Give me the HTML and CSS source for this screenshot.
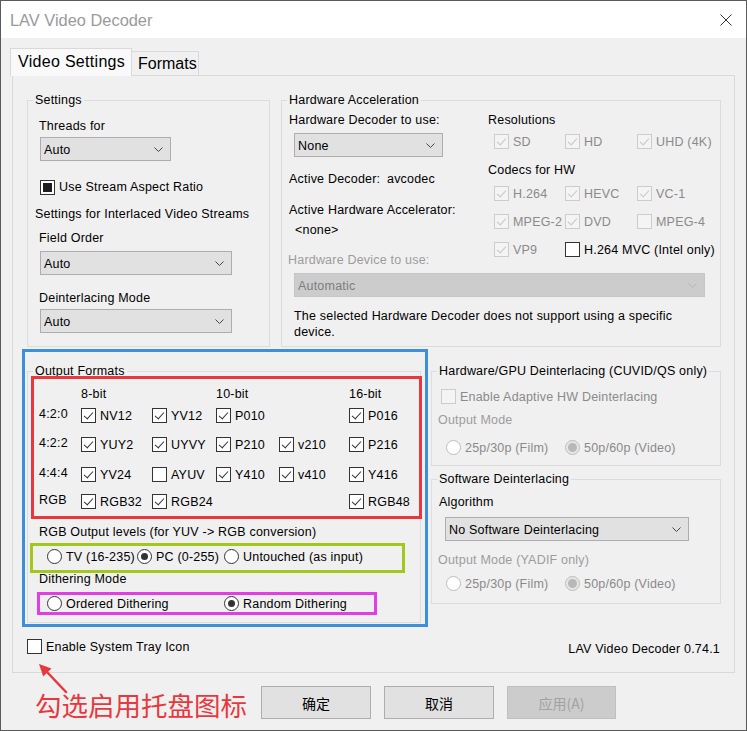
FILE: index.html
```html
<!DOCTYPE html>
<html>
<head>
<meta charset="utf-8">
<link rel="stylesheet" href="styles.css">
</head>
<body>
<div class="window">
  <div class="titlebar">
    <span class="title">LAV Video Decoder</span>
    <svg class="close" width="12" height="12" viewBox="0 0 12 12"><path d="M0.5 0.5L11.5 11.5M11.5 0.5L0.5 11.5" stroke="#333" stroke-width="1" fill="none"/></svg>
  </div>
  <div class="tabs">
    <div class="tab active">Video Settings</div>
    <div class="tab fmt">Formats</div>
  </div>
  <div class="panel">
    <div class="row1">
      <div class="group g-set">
        <span class="gtitle">Settings</span>
        <div class="txt set-threads">Threads for</div>
        <div class="sel sel-threads"><span>Auto</span><svg width="9" height="5" viewBox="0 0 9 5"><path d="M0.5 0.5L4.5 4.5L8.5 0.5" fill="none" stroke="#444"/></svg></div>
        <div class="ck set-aspect"><span class="cb ind"></span><span>Use Stream Aspect Ratio</span></div>
        <div class="txt set-inter">Settings for Interlaced Video Streams</div>
        <div class="txt set-field">Field Order</div>
        <div class="sel sel-field"><span>Auto</span><svg width="9" height="5" viewBox="0 0 9 5"><path d="M0.5 0.5L4.5 4.5L8.5 0.5" fill="none" stroke="#444"/></svg></div>
        <div class="txt set-deint">Deinterlacing Mode</div>
        <div class="sel sel-deint"><span>Auto</span><svg width="9" height="5" viewBox="0 0 9 5"><path d="M0.5 0.5L4.5 4.5L8.5 0.5" fill="none" stroke="#444"/></svg></div>
      </div>
      <div class="group g-hw">
        <span class="gtitle">Hardware Acceleration</span>
        <div class="hw-top">
          <div class="hw-left">
            <div class="txt hw-dec">Hardware Decoder to use:</div>
            <div class="sel sel-hw"><span>None</span><svg width="9" height="5" viewBox="0 0 9 5"><path d="M0.5 0.5L4.5 4.5L8.5 0.5" fill="none" stroke="#444"/></svg></div>
            <div class="txt hw-active"><span class="ad-label">Active Decoder:</span>avcodec</div>
            <div class="txt hw-acc">Active Hardware Accelerator:</div>
            <div class="txt hw-none">&lt;none&gt;</div>
            <div class="txt dis2 hw-dev">Hardware Device to use:</div>
          </div>
          <div class="hw-right">
            <div class="txt res-title">Resolutions</div>
            <div class="cgrid res">
              <div class="ck dis"><span class="cb dis on"></span><span>SD</span></div>
              <div class="ck dis"><span class="cb dis on"></span><span>HD</span></div>
              <div class="ck dis"><span class="cb dis on"></span><span>UHD (4K)</span></div>
            </div>
            <div class="txt codecs">Codecs for HW</div>
            <div class="cgrid codec">
              <div class="ck dis"><span class="cb dis on"></span><span>H.264</span></div>
              <div class="ck dis"><span class="cb dis on"></span><span>HEVC</span></div>
              <div class="ck dis"><span class="cb dis on"></span><span>VC-1</span></div>
              <div class="ck dis"><span class="cb dis on"></span><span>MPEG-2</span></div>
              <div class="ck dis"><span class="cb dis on"></span><span>DVD</span></div>
              <div class="ck dis"><span class="cb dis"></span><span>MPEG-4</span></div>
              <div class="ck dis"><span class="cb dis on"></span><span>VP9</span></div>
              <div class="ck mvc"><span class="cb"></span><span>H.264 MVC (Intel only)</span></div>
            </div>
          </div>
        </div>
        <div class="sel dis sel-dev"><span>Automatic</span><svg width="9" height="5" viewBox="0 0 9 5"><path d="M0.5 0.5L4.5 4.5L8.5 0.5" fill="none" stroke="#b4b4b4"/></svg></div>
        <div class="txt hw-note">The selected Hardware Decoder does not support using a specific<br>device.</div>
      </div>
    </div>

    <div class="row2">
      <div class="blue">
        <div class="group g-out">
          <span class="gtitle">Output Formats</span>
          <div class="red">
            <div></div><div class="txt">8-bit</div><div></div><div class="txt">10-bit</div><div></div><div class="txt">16-bit</div>

            <div class="rowlab">4:2:0</div>
            <div class="ck"><span class="cb on"></span><span>NV12</span></div>
            <div class="ck"><span class="cb on"></span><span>YV12</span></div>
            <div class="ck"><span class="cb on"></span><span>P010</span></div>
            <div></div>
            <div class="ck"><span class="cb on"></span><span>P016</span></div>

            <div class="rowlab">4:2:2</div>
            <div class="ck"><span class="cb on"></span><span>YUY2</span></div>
            <div class="ck"><span class="cb on"></span><span>UYVY</span></div>
            <div class="ck"><span class="cb on"></span><span>P210</span></div>
            <div class="ck"><span class="cb on"></span><span>v210</span></div>
            <div class="ck"><span class="cb on"></span><span>P216</span></div>

            <div class="rowlab">4:4:4</div>
            <div class="ck"><span class="cb on"></span><span>YV24</span></div>
            <div class="ck"><span class="cb"></span><span>AYUV</span></div>
            <div class="ck"><span class="cb on"></span><span>Y410</span></div>
            <div class="ck"><span class="cb on"></span><span>v410</span></div>
            <div class="ck"><span class="cb on"></span><span>Y416</span></div>

            <div class="rowlab">RGB</div>
            <div class="ck"><span class="cb on"></span><span>RGB32</span></div>
            <div class="ck"><span class="cb on"></span><span>RGB24</span></div>
            <div></div>
            <div></div>
            <div class="ck"><span class="cb on"></span><span>RGB48</span></div>
          </div>
          <div class="txt lbl-rgb">RGB Output levels (for YUV -&gt; RGB conversion)</div>
          <div class="green">
            <div class="ck"><span class="rb"></span><span>TV (16-235)</span></div>
            <div class="ck"><span class="rb on"></span><span>PC (0-255)</span></div>
            <div class="ck"><span class="rb"></span><span>Untouched (as input)</span></div>
          </div>
          <div class="txt lbl-dith">Dithering Mode</div>
          <div class="magenta">
            <div class="ck"><span class="rb"></span><span>Ordered Dithering</span></div>
            <div class="ck"><span class="rb on"></span><span>Random Dithering</span></div>
          </div>
        </div>
      </div>

      <div class="rcol">
        <div class="group g-hwd">
          <span class="gtitle">Hardware/GPU Deinterlacing (CUVID/QS only)</span>
          <div class="ck dis hwd-en"><span class="cb dis"></span><span>Enable Adaptive HW Deinterlacing</span></div>
          <div class="txt dis2 hwd-om">Output Mode</div>
          <div class="rrow hwd-r">
            <div class="ck dis"><span class="rb dis"></span><span class="clip c1">25p/30p (Film)</span></div>
            <div class="ck dis"><span class="rb dis on"></span><span class="clip c2">50p/60p (Video)</span></div>
          </div>
        </div>
        <div class="group g-swd">
          <span class="gtitle">Software Deinterlacing</span>
          <div class="txt swd-alg">Algorithm</div>
          <div class="sel sel-alg"><span>No Software Deinterlacing</span><svg width="9" height="5" viewBox="0 0 9 5"><path d="M0.5 0.5L4.5 4.5L8.5 0.5" fill="none" stroke="#444"/></svg></div>
          <div class="txt dis2 swd-om">Output Mode (YADIF only)</div>
          <div class="rrow swd-r">
            <div class="ck dis"><span class="rb dis"></span><span class="clip c1">25p/30p (Film)</span></div>
            <div class="ck dis"><span class="rb dis on"></span><span class="clip c2">50p/60p (Video)</span></div>
          </div>
        </div>
      </div>
    </div>

    <div class="row3">
      <div class="ck tray"><span class="cb"></span><span>Enable System Tray Icon</span></div>
      <div class="version">LAV Video Decoder 0.74.1</div>
    </div>
  </div>

  <div class="btnrow">
    <div class="anno">勾选启用托盘图标</div>
    <div class="btn">确定</div>
    <div class="btn">取消</div>
    <div class="btn dis">应用(A)</div>
  </div>

  <svg class="arrow" width="747" height="731" viewBox="0 0 747 731">
    <path d="M66 692L47 672" stroke="#e8383d" stroke-width="2.5" stroke-linecap="round" fill="none"/>
    <polygon points="39,664 51.5,668.5 43.2,676.5" fill="#e8383d"/>
  </svg>
</div>
</body>
</html>
```

FILE: styles.css
```css
html, body {
  margin: 0;
  padding: 0;
  background: #f0f0f0;
}
body {
  font-family: "Liberation Sans", Arial, sans-serif;
  font-size: 12.5px;
  letter-spacing: 0.2px;
  color: #000;
}
.window {
  position: relative;
  width: 747px;
  height: 731px;
  box-sizing: border-box;
  border: 1px solid #5a5a5a;
  background: #f0f0f0;
  overflow: hidden;
}
.titlebar {
  height: 37px;
  background: #fff;
  display: flex;
  align-items: center;
  justify-content: space-between;
  padding: 0 14px 0 9px;
}
.title {
  font-size: 16.4px;
  letter-spacing: 0;
  color: #9a9a9a;
  padding-top: 1px;
}
.close { display: block; }

/* tabs */
.tabs {
  display: flex;
  align-items: flex-end;
  height: 28px;
  margin: 10px 0 -1px 9px;
  position: relative;
  z-index: 2;
}
.tab {
  box-sizing: border-box;
  border: 1px solid #d9d9d9;
  border-bottom: none;
  font-size: 16px;
  line-height: 18px;
}
.tab.active {
  width: 122px;
  height: 28px;
  background: #f9f9f9;
  padding: 4px 0 0 7px;
  letter-spacing: 0.3px;
}
.tab.fmt {
  width: 67px;
  height: 24px;
  margin-bottom: 1px;
  border-left: none;
  padding: 3px 0 0 6px;
  letter-spacing: 0;
  background: #f0f0f0;
}
.panel {
  margin-left: 11px;
  width: 723px;
  height: 598px;
  box-sizing: border-box;
  border: 1px solid #d9d9d9;
  padding-top: 24px;
}

/* generic */
.txt {
  line-height: 14px;
  padding-top: 2px;
}
.dis2 { color: #9c9c9c; }
.group {
  position: relative;
  box-sizing: border-box;
  border: 1px solid #dcdcdc;
}
.gtitle {
  position: absolute;
  top: -9px;
  left: 5px;
  padding: 0 2px;
  line-height: 16px;
  background: #f0f0f0;
  white-space: nowrap;
}
.sel {
  display: flex;
  align-items: center;
  justify-content: space-between;
  height: 24px;
  box-sizing: border-box;
  border: 1px solid #adadad;
  background: #e1e1e1;
  padding: 1px 7px 0 3px;
}
.sel svg { display: block; flex: none; margin-top: -1px; }
.sel.dis {
  background: #cccccc;
  border-color: #c6c6c6;
  color: #7d7d7d;
}
.ck {
  display: flex;
  align-items: center;
  gap: 4px;
  height: 15px;
  line-height: 15px;
  white-space: nowrap;
}
.ck > span:last-child { padding-top: 1px; }
.ck.dis { color: #8a8a8a; }
.cb {
  width: 15px;
  height: 15px;
  box-sizing: border-box;
  border: 1px solid #333;
  background: #fff;
  display: inline-flex;
  align-items: center;
  justify-content: center;
  flex: none;
  padding: 0 !important;
}
.cb.on::after {
  content: "";
  width: 4px;
  height: 8px;
  border: solid #333;
  border-width: 0 1.2px 1.2px 0;
  transform: translate(0, -1px) rotate(42deg);
}
.cb.ind::after {
  content: "";
  width: 9px;
  height: 9px;
  background: #1e1e1e;
}
.cb.dis {
  border-color: #cccccc;
  background: #f4f4f4;
}
.cb.dis.on::after { border-color: #c6c6c6; }
.rb {
  width: 15px;
  height: 15px;
  box-sizing: border-box;
  border: 1px solid #333;
  border-radius: 50%;
  background: #fff;
  display: inline-flex;
  align-items: center;
  justify-content: center;
  flex: none;
  padding: 0 !important;
}
.rb.on::after {
  content: "";
  width: 7px;
  height: 7px;
  border-radius: 50%;
  background: #333;
}
.rb.dis { border-color: #bdbdbd; }
.rb.dis.on { background: #e6e6e6; }
.rb.dis.on::after { width: 9px; height: 9px; background: #b8b8b8; }
.clip { overflow: hidden; display: block; }
.c1 { width: 87px; }
.c2 { width: 97px; }

/* row 1 */
.row1 {
  display: flex;
  align-items: flex-start;
  margin-left: 14px;
}
.g-set { width: 243px; height: 247px; }
.set-threads { margin: 16px 0 0 11px; }
.sel-threads { margin: 4px 0 0 12px; width: 131px; }
.set-aspect { margin: 18px 0 0 12px; height: 16px; }
.set-inter { margin: 10px 0 0 7px; }
.set-field { margin: 8px 0 0 11px; }
.sel-field { margin: 6px 0 0 12px; width: 192px; }
.set-deint { margin: 14px 0 0 11px; }
.sel-deint { margin: 4px 0 0 12px; width: 192px; }

.g-hw { width: 440px; height: 247px; margin-left: 11px; }
.hw-top {
  display: grid;
  grid-template-columns: 206px auto;
  align-items: start;
}
.hw-dec { margin: 10px 0 0 7px; }
.sel-hw { margin: 6px 0 0 12px; width: 149px; }
.hw-active { margin: 13px 0 0 7px; }
.ad-label { display: inline-block; width: 98px; }
.hw-acc { margin: 15px 0 0 7px; }
.hw-none { margin: 4px 0 0 13px; }
.hw-dev { margin: 14px 0 0 6px; }
.res-title { margin-top: 10px; }
.cgrid {
  display: grid;
  grid-template-columns: 71px 72px auto;
  padding-left: 6px;
}
.res { margin-top: 7px; }
.codecs { margin-top: 12px; }
.codec { margin-top: 9px; row-gap: 13px; }
.sel-dev { margin: 6px 0 0 12px; width: 411px; }
.hw-note { margin: 10px 0 0 12px; line-height: 16px; padding-top: 1px; }

/* row 2 */
.row2 {
  display: flex;
  align-items: flex-start;
  margin: 2px 0 0 9px;
}
.blue {
  width: 406px;
  height: 278px;
  box-sizing: border-box;
  border: 3px solid #3d8fdc;
}
.g-out {
  margin: 19px 0 0 2px;
  width: 394px;
  height: 252px;
}
.red {
  position: relative;
  z-index: 1;
  margin: 4px 0 0 3px;
  width: 391px;
  height: 143px;
  box-sizing: border-box;
  border: 3px solid #e8383d;
  padding: 6px 0 0 5px;
  display: grid;
  grid-template-columns: 42px 71px 64px 63px 70px auto;
  grid-template-rows: 23px 29px 30px 27px 15px;
  align-items: start;
}
.rowlab { line-height: 15px; margin-top: -1px; }
.lbl-rgb { margin: 4px 0 0 11px; }
.green {
  margin: 4px 0 0 2px;
  width: 375px;
  height: 30px;
  box-sizing: border-box;
  border: 3px solid #a3c81c;
  padding: 3px 0 0 14px;
  display: grid;
  grid-template-columns: 90px 87px auto;
  align-items: start;
}
.lbl-dith { margin: -3px 0 0 11px; }
.magenta {
  margin: 6px 0 0 9px;
  width: 340px;
  height: 23px;
  box-sizing: border-box;
  border: 3px solid #e23ee6;
  padding: 1px 0 0 7px;
  display: grid;
  grid-template-columns: 177px auto;
  align-items: start;
}

.rcol { margin-left: 3px; width: 290px; }
.g-hwd { margin-top: 22px; height: 95px; }
.g-swd { margin-top: 13px; height: 125px; }
.hwd-en { margin: 17px 0 0 9px; }
.hwd-om { margin: 7px 0 0 6px; }
.rrow {
  display: grid;
  grid-template-columns: 119px auto;
}
.hwd-r { margin: 13px 0 0 14px; }
.swd-alg { margin: 13px 0 0 7px; }
.sel-alg { margin: 8px 0 0 13px; width: 244px; }
.swd-om { margin: 10px 0 0 6px; }
.swd-r { margin: 9px 0 0 14px; }

/* row 3 */
.row3 {
  display: flex;
  align-items: center;
  justify-content: space-between;
  margin: 12px 14px 0 14px;
  height: 15px;
}
.version { margin-top: 5px; }

/* buttons */
.btnrow {
  display: flex;
  align-items: center;
  margin-top: 13px;
  padding-left: 34px;
  height: 33px;
}
.anno {
  width: 226px;
  font-family: "Noto Sans CJK SC", sans-serif;
  font-size: 26.5px;
  letter-spacing: 0;
  line-height: 33px;
  padding-top: 3px;
  color: #e8383d;
  white-space: nowrap;
}
.btn {
  width: 110px;
  height: 33px;
  box-sizing: border-box;
  border: 1px solid #adadad;
  background: #e1e1e1;
  display: flex;
  align-items: center;
  justify-content: center;
  font-family: "Noto Sans CJK SC", sans-serif;
  font-size: 14px;
  letter-spacing: 0;
  margin-right: 13px;
}
.btn.dis {
  width: 109px;
  color: #a2a2a2;
  background: #cccccc;
  border-color: #bfbfbf;
}
.arrow {
  position: absolute;
  left: -1px;
  top: -1px;
  pointer-events: none;
}
```
